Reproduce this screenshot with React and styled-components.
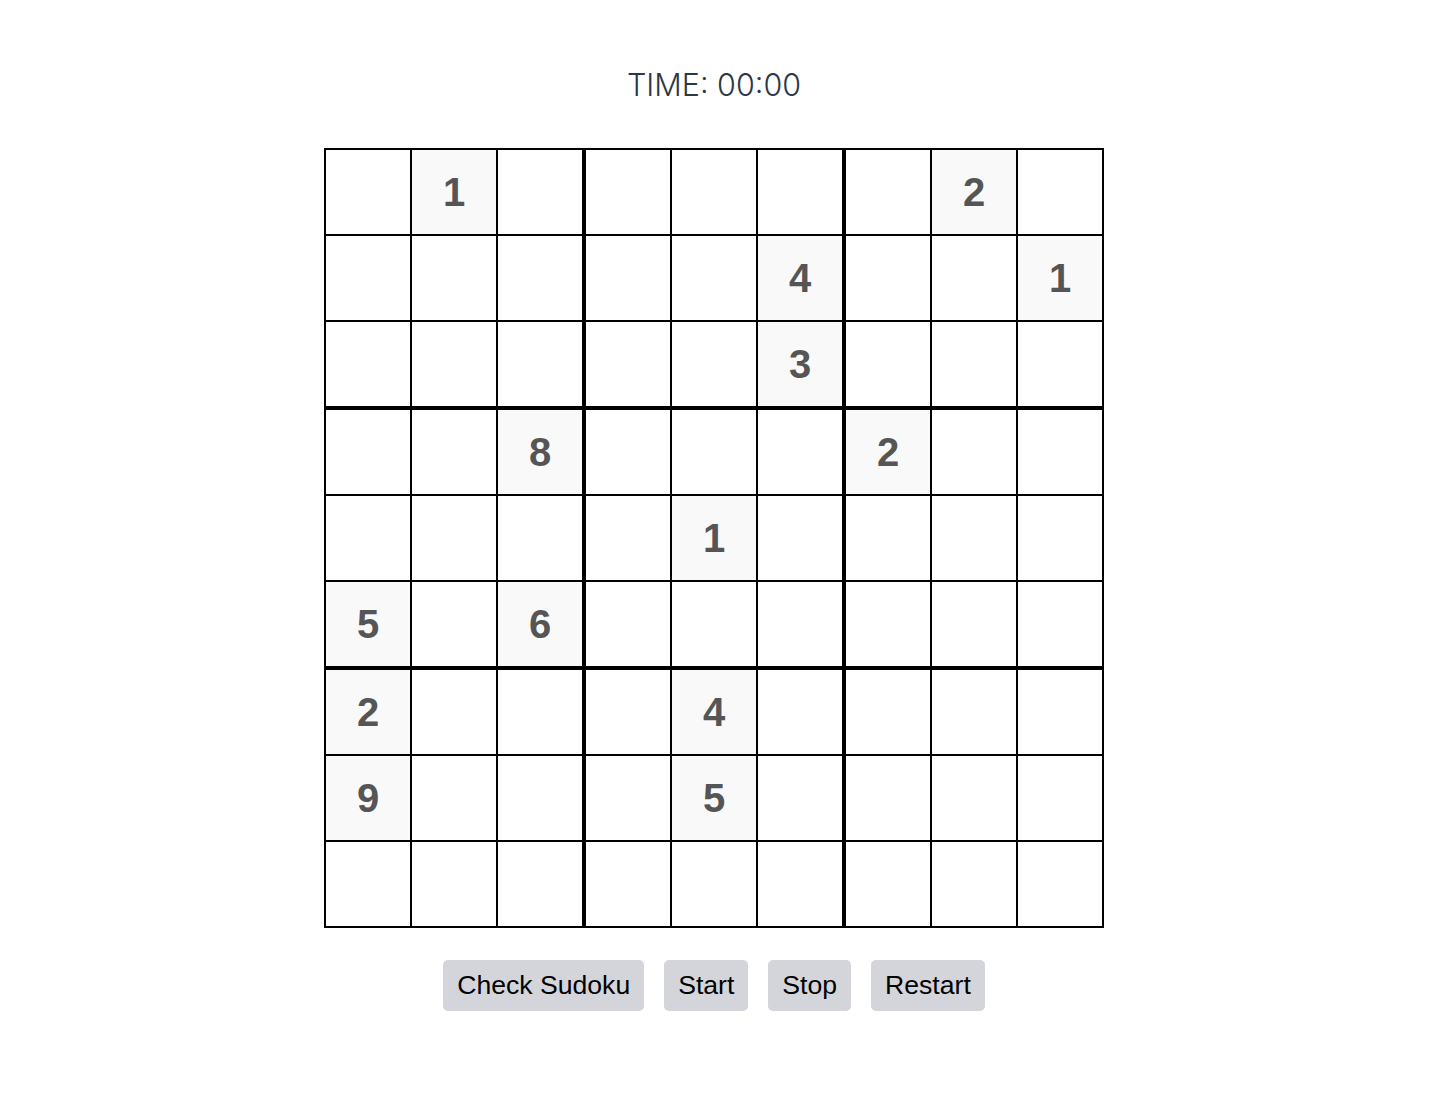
import React from "react";
import styled, { createGlobalStyle } from "styled-components";

const Global = createGlobalStyle`
  html, body { margin: 0; padding: 0; background: #ffffff; }
  body { font-family: "Liberation Sans", Arial, sans-serif; }
`;

const Page = styled.div`
  display: flex;
  flex-direction: column;
  align-items: center;
  padding: 65px 6px 0 0;
`;

const Timer = styled.div`
  font-family: Inter, "Noto Sans", sans-serif;
  font-weight: 300;
  font-size: 30.5px;
  line-height: 40px;
  color: #2d3748;
  margin-bottom: 43px;
`;

const SIZES = [84, 84, 86, 84, 84, 86, 84, 84, 84];

const Board = styled.div`
  display: grid;
  grid-template-columns: ${SIZES.map((s) => s + "px").join(" ")};
  grid-template-rows: ${SIZES.map((s) => s + "px").join(" ")};
  gap: 2px;
  border: 2px solid #000;
  background: #000;
`;

const Cell = styled.div`
  box-sizing: border-box;
  display: flex;
  align-items: center;
  justify-content: center;
  background: ${(p) => (p.$given ? "#f9f9f9" : "#ffffff")};
  border-right: ${(p) => (p.$thickRight ? "2px solid #000" : "none")};
  border-bottom: ${(p) => (p.$thickBottom ? "2px solid #000" : "none")};
  font-family: "Liberation Sans", Arial, sans-serif;
  font-weight: 700;
  font-size: 40px;
  color: #555555;
`;

const Controls = styled.div`
  display: flex;
  gap: 20px;
  margin-top: 32px;
`;

const Button = styled.button`
  font-family: "Liberation Sans", Arial, sans-serif;
  font-size: 26.6px;
  line-height: 31px;
  color: #000;
  background: #d4d5da;
  border: none;
  border-radius: 5px;
  padding: 10px 14px;
  cursor: pointer;
`;

const PUZZLE = [
  "010000020",
  "000004001",
  "000003000",
  "008000200",
  "000010000",
  "506000000",
  "200040000",
  "900050000",
  "000000000",
];

export default function App() {
  return (
    <>
      <Global />
      <Page>
        <Timer>TIME: 00:00</Timer>
        <Board>
          {PUZZLE.map((row, r) =>
            row.split("").map((ch, c) => (
              <Cell
                key={`${r}-${c}`}
                $given={ch !== "0"}
                $thickRight={c === 2 || c === 5}
                $thickBottom={r === 2 || r === 5}
              >
                {ch !== "0" ? ch : ""}
              </Cell>
            ))
          )}
        </Board>
        <Controls>
          <Button>Check Sudoku</Button>
          <Button>Start</Button>
          <Button>Stop</Button>
          <Button>Restart</Button>
        </Controls>
      </Page>
    </>
  );
}
